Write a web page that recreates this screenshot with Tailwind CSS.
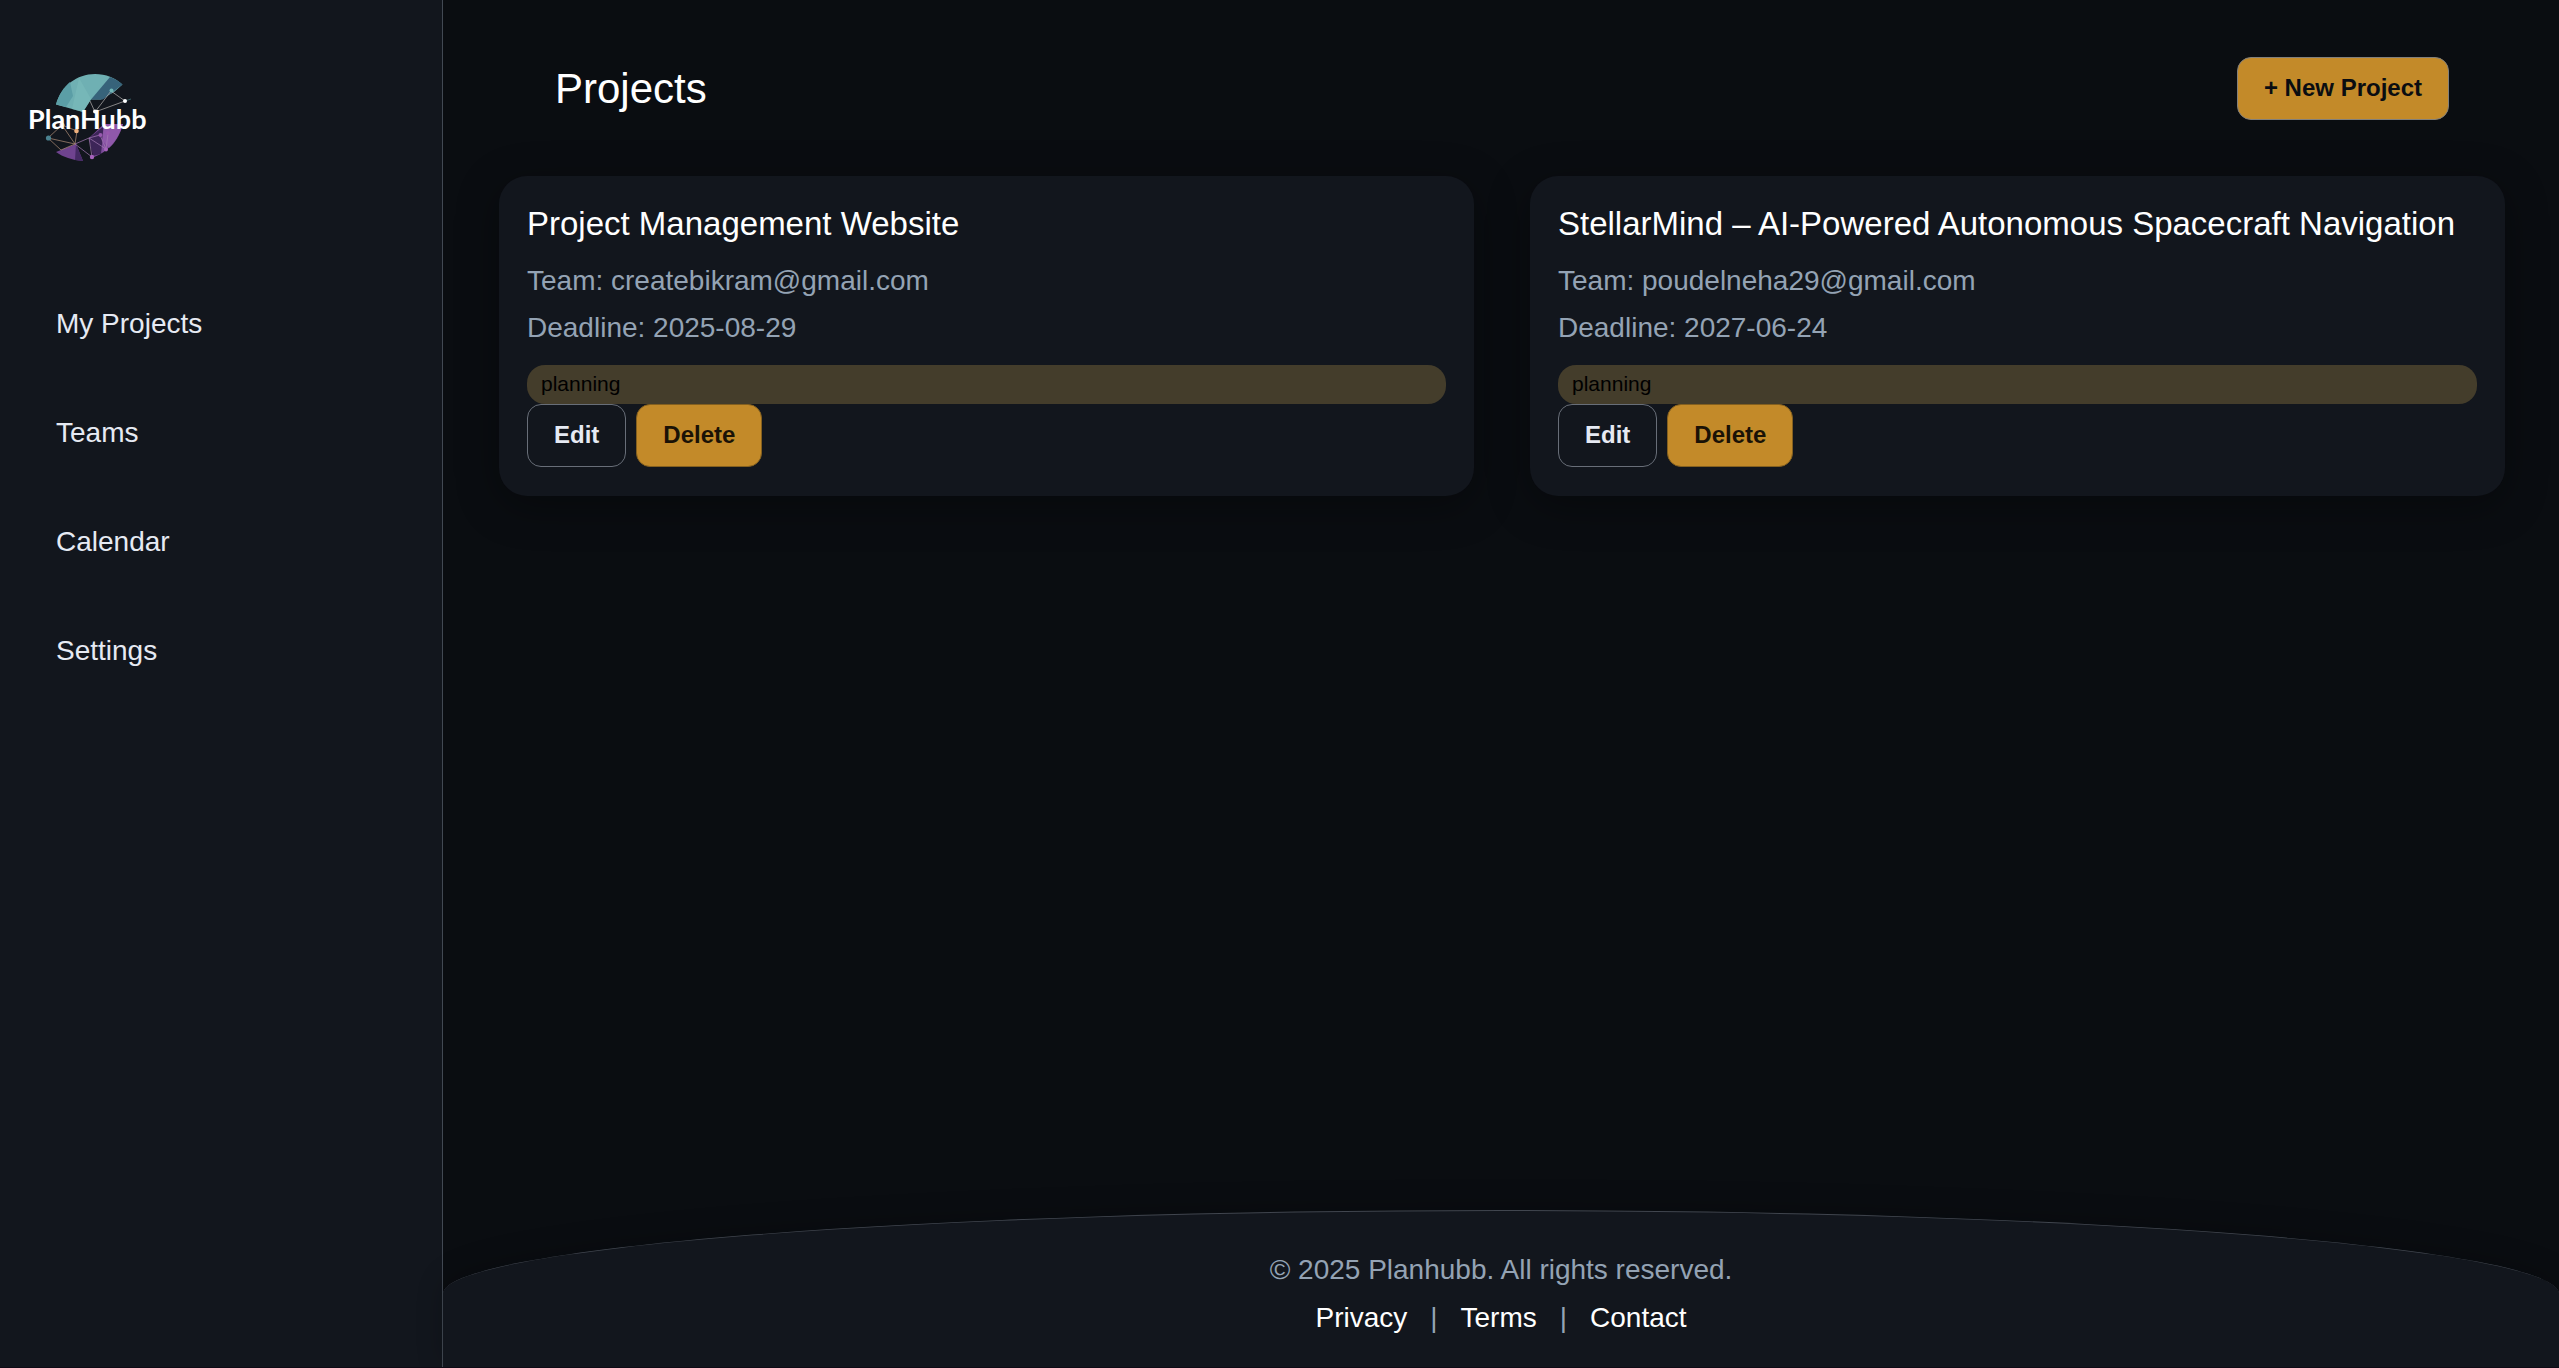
<!DOCTYPE html>
<html lang="en">
<head>
<meta charset="utf-8">
<meta name="viewport" content="width=device-width, initial-scale=1">
<title>PlanHubb – Projects</title>
<script src="https://cdn.jsdelivr.net/npm/@tailwindcss/browser@4"></script>
</head>
<body class="flex min-h-screen border-b border-[#0f0a15] bg-[#0a0d11] font-['Liberation_Sans',Arial,sans-serif] text-[28px] leading-8 text-[#e6eaf3]">
  <aside class="w-[443px] shrink-0 border-r border-[#424953] bg-[#12161d] pt-[68px]">
    <a href="#" aria-label="PlanHubb home" class="ml-[26px] block w-[150px]">
      <svg class="block h-[100px] w-[150px]" viewBox="26 68 150 100" role="img" aria-label="PlanHubb">
        <path d="M56 104.500 C61 86 77 74 95 74 C106 74 115 78 122.500 84.500 L114 92 L101 99.500 L91 99.500 L83 112 Z" fill="#6fb0b3"/>
        <path d="M56 104.500 C59 94 64 87 70 82 L73 96 L66 107 Z" fill="#5b9ea6"/>
        <path d="M79 78 L91 99 L83 112 L72 109 Z" fill="#7cbdbb" opacity=".6"/>
        <path d="M110 77 C115 79 119 81 122.500 84.500 L103 99.500 H91 Z" fill="#37637a"/>
        <path d="M89 138 L104 124 H123 C118 140 108 152 94 157 Z" fill="#7e4d9b"/>
        <path d="M89 138 L104 126 L101 154 L93 156 Z" fill="#3d2558"/>
        <path d="M104 124 H123 C120 135 115 143 109 148 L102 140 Z" fill="#935bae" opacity=".8"/>
        <path d="M56 152 L76 144 L83 161 C72 160 63 157 56 152 Z" fill="#6f438f"/>
        <path d="M76 144 L83 161 L75 160 Z" fill="#452a64"/>
        <g fill="none" stroke="#b5b1b0" stroke-width=".7">
          <path d="M90 101 L95 112 L111 91 L125 101 L95 112"/>
          <path d="M125 101 L131 99" stroke="#45777c"/>
          <path d="M62 125 L48 138 L75 144 L62 125 L77 131 L75 144 L61 150 L48 138" stroke="#b18f78"/>
          <path d="M75 144 L89 138 L106 149 L100 135 L89 138 M75 144 L92 157 M89 138 L92 157 M106 149 L108 134" stroke="#a57bb4"/>
        </g>
        <circle cx="111.500" cy="90.500" r="2" fill="#70b6b7"/>
        <circle cx="125" cy="101" r="2" fill="#fff"/>
        <circle cx="95" cy="111.500" r="2" fill="#fff"/>
        <circle cx="48.500" cy="138" r="2.600" fill="#4b8290"/>
        <circle cx="62" cy="125" r="2.600" fill="#e5a36e"/>
        <circle cx="76.500" cy="131" r="2.300" fill="#efb17d"/>
        <circle cx="92" cy="157" r="2.200" fill="#a763bd"/>
        <circle cx="106" cy="149.500" r="2" fill="#a763bd"/>
        <circle cx="100.500" cy="135" r="2" fill="#9858ae"/>
        <circle cx="108" cy="133" r="2" fill="#9858ae"/>
        <text x="28" y="129" font-family="Lato, sans-serif" font-size="27" font-weight="700" fill="#fff">PlanHubb</text>
      </svg>
    </a>
    <nav aria-label="Main" class="mt-[140px] flex flex-col gap-[77px] px-14">
      <a href="#">My Projects</a>
      <a href="#">Teams</a>
      <a href="#">Calendar</a>
      <a href="#">Settings</a>
    </nav>
  </aside>

  <div class="flex min-w-0 grow flex-col">
    <main class="grow pt-[57px] pr-[54px] pl-14">
      <header class="flex items-center justify-between px-14">
        <h1 class="text-[42px] leading-[48px] text-white">Projects</h1>
        <button type="button" class="rounded-[14px] border border-[#83807b] bg-[#c38a29] px-[26px] pt-4 pb-[18px] text-2xl leading-[27px] font-bold text-[#0a0d11]">+ New Project</button>
      </header>

      <section aria-label="Project list" class="mt-14 grid grid-cols-2 gap-14">
        <article class="rounded-[28px] bg-[#12161d] px-7 pt-7 pb-[29px] shadow-[0_10px_42px_rgba(0,0,0,0.35)]">
          <h2 class="text-[33px] leading-10 text-white">Project Management Website</h2>
          <p class="mt-[21px] text-[#94a3b4]">Team: createbikram@gmail.com</p>
          <p class="mt-[15px] text-[#94a3b4]">Deadline: 2025-08-29</p>
          <p class="mt-[21px] rounded-[18px] bg-[#443d2b] px-3.5 pt-1.5 pb-2 text-[21px] leading-[25px] text-black">planning</p>
          <div class="flex gap-2.5">
            <button type="button" class="rounded-[14px] border border-[#686e78] px-[26px] pt-4 pb-[18px] text-2xl leading-[27px] font-bold">Edit</button>
            <button type="button" class="rounded-[14px] border border-[#84601f] bg-[#c38a29] px-[26px] pt-4 pb-[18px] text-2xl leading-[27px] font-bold text-[#1a1206]">Delete</button>
          </div>
        </article>
        <article class="rounded-[28px] bg-[#12161d] px-7 pt-7 pb-[29px] shadow-[0_10px_42px_rgba(0,0,0,0.35)]">
          <h2 class="text-[33px] leading-10 text-white">StellarMind – AI-Powered Autonomous Spacecraft Navigation</h2>
          <p class="mt-[21px] text-[#94a3b4]">Team: poudelneha29@gmail.com</p>
          <p class="mt-[15px] text-[#94a3b4]">Deadline: 2027-06-24</p>
          <p class="mt-[21px] rounded-[18px] bg-[#443d2b] px-3.5 pt-1.5 pb-2 text-[21px] leading-[25px] text-black">planning</p>
          <div class="flex gap-2.5">
            <button type="button" class="rounded-[14px] border border-[#686e78] px-[26px] pt-4 pb-[18px] text-2xl leading-[27px] font-bold">Edit</button>
            <button type="button" class="rounded-[14px] border border-[#84601f] bg-[#c38a29] px-[26px] pt-4 pb-[18px] text-2xl leading-[27px] font-bold text-[#1a1206]">Delete</button>
          </div>
        </article>
      </section>
    </main>

    <footer class="rounded-t-[50%_84px] border-t border-[#41464f] bg-[#12161d] pt-[43px] pb-[33px] text-center text-[#94a3b4] shadow-[0_-4px_28px_rgba(0,0,0,0.2)]">
      <p>© 2025 Planhubb. All rights reserved.</p>
      <nav aria-label="Footer" class="mt-4 flex justify-center gap-[23px]">
        <a href="#" class="text-white">Privacy</a>
        <span>|</span>
        <a href="#" class="text-white">Terms</a>
        <span>|</span>
        <a href="#" class="text-white">Contact</a>
      </nav>
    </footer>
  </div>
</body>
</html>
